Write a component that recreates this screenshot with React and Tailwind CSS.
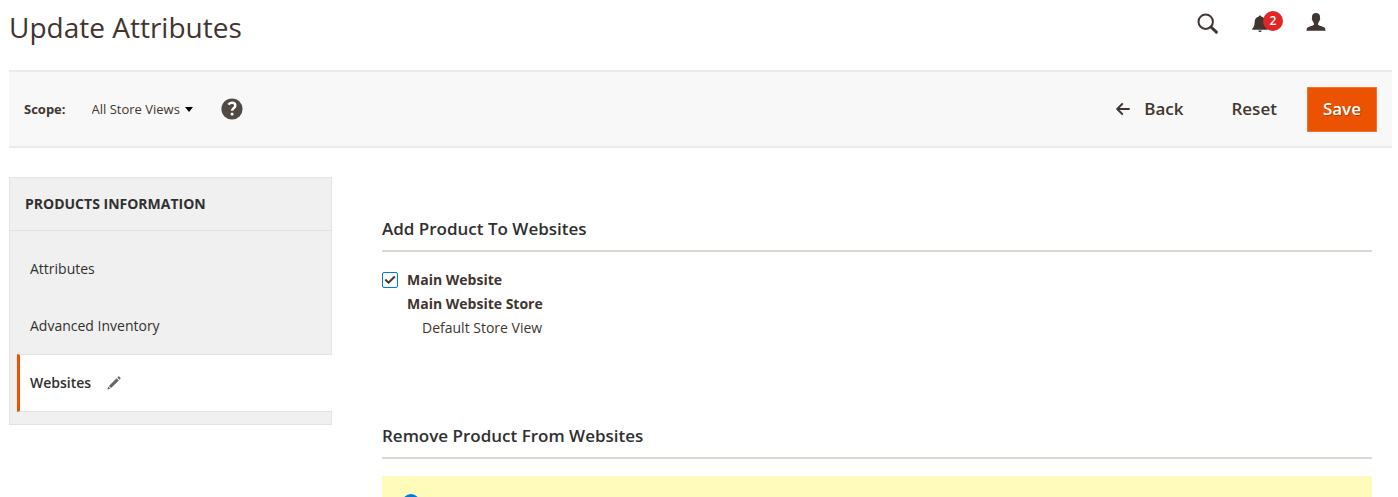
const TABS = [
  { label: "Attributes", active: false },
  { label: "Advanced Inventory", active: false },
  { label: "Websites", active: true },
];

function SearchIcon() {
  return (
    <svg className="size-[22px]" viewBox="0 0 22 22" fill="none" stroke="currentColor" aria-hidden="true">
      <circle cx="8.700" cy="8.700" r="7.200" strokeWidth="2" />
      <path d="M14 14 19.400 19.200" strokeWidth="3" strokeLinecap="round" />
    </svg>
  );
}

function BellIcon() {
  return (
    <svg className="h-[18px] w-4" viewBox="0 0 16 18" fill="currentColor" aria-hidden="true">
      <path d="M8 .4c.7 0 1.200.5 1.200 1.200 2.500.6 4 2.500 4.100 4.900.1 3.300.7 5.600 2.400 7v1.200H.3v-1.200c1.700-1.400 2.300-3.700 2.400-7 .1-2.400 1.600-4.300 4.100-4.900C6.800.9 7.300.4 8 .4Z" />
      <path d="M6.200 15.600h3.600c-.2.900-.9 1.500-1.800 1.500s-1.600-.6-1.800-1.500Z" />
    </svg>
  );
}

function UserIcon() {
  return (
    <svg className="h-[22px] w-5" viewBox="0 0 20 22" fill="currentColor" aria-hidden="true">
      <path d="M10 0c2.600 0 4 1.500 4 3.800 0 .5-.1 1-.1 1.400.5.200.4 1.600-.4 2.200-.3 1.100-.8 2-1.400 2.600v1.700c1.300 1 3.200 1.300 5.200 2.200 1.700.7 2.200 1.700 2.200 3.800h-19c0-2.100.5-3.100 2.200-3.800 2-.9 3.900-1.200 5.200-2.200V10c-.6-.6-1.100-1.500-1.400-2.600-.8-.6-.9-2-.4-2.200 0-.4-.1-.9-.1-1.400C6 1.500 7.400 0 10 0Z" />
    </svg>
  );
}

function ArrowLeftIcon() {
  return (
    <svg className="h-3 w-[14px]" viewBox="0 0 14 12" fill="none" stroke="currentColor" strokeWidth="1.900" strokeLinecap="round" strokeLinejoin="round" aria-hidden="true">
      <path d="M13 6H1.500M6.200 1 1.200 6l5 5" />
    </svg>
  );
}

function HelpIcon() {
  return (
    <svg className="size-[22px]" viewBox="0 0 22 22" aria-hidden="true">
      <circle cx="11" cy="11" r="10.600" fill="#514943" />
      <path d="M7.500 6.700c.8-1.400 2-2 3.500-2 2 0 3.300 1 3.300 2.700 0 2.700-3.200 2.700-3.200 5.400" fill="none" stroke="#fff" strokeWidth="2.500" />
      <rect x="9.700" y="14.800" width="2.800" height="2.800" rx="1" fill="#fff" />
    </svg>
  );
}

function PencilIcon() {
  return (
    <svg className="size-[14px]" viewBox="0 0 14 14" fill="#6b645f" aria-hidden="true">
      <path d="m.4 13.600.9-3 2.100 2.100-3 .9ZM1.900 9.900l7.700-7.700 2.200 2.200-7.700 7.700-2.200-2.200ZM10.300 1.500l.9-.9c.3-.3.700-.3 1 0l1.200 1.200c.3.300.3.700 0 1l-.9.900-2.200-2.200Z" />
    </svg>
  );
}

function Section({ title, children }) {
  return (
    <section>
      <h2 className="border-b-2 border-[#dcd8d0] pb-[9px] text-[17px] leading-6 font-semibold text-[#303030]">
        {title}
      </h2>
      {children}
    </section>
  );
}

export default function App() {
  return (
    <div className="flex h-screen flex-col overflow-hidden bg-white pr-1.5 pl-[9px] font-['Open_Sans','Noto_Sans',sans-serif] text-sm text-[#41362f]">
      <header className="flex h-[70px] shrink-0 items-start justify-between pr-[66px]">
        <h1 className="pt-[7px] text-[28px] leading-10">Update Attributes</h1>
        <div className="flex items-center pt-[13px]">
          <button type="button" aria-label="Search">
            <SearchIcon />
          </button>
          <button type="button" aria-label="Notifications" className="relative mr-[38px] ml-[33px]">
            <BellIcon />
            <span className="absolute -top-1 left-[11px] flex size-5 items-center justify-center rounded-full bg-[#e22626] text-xs font-semibold text-white">
              2
            </span>
          </button>
          <button type="button" aria-label="Account">
            <UserIcon />
          </button>
        </div>
      </header>

      <div className="flex h-[78px] shrink-0 items-center justify-between border-t-2 border-b-2 border-[#ebebeb] bg-[#f8f8f8] px-[15px]">
        <div className="flex items-center">
          <label htmlFor="scope" className="text-[13px] leading-5 font-bold">
            Scope:
          </label>
          <div className="relative ml-[26px] flex items-center">
            <select id="scope" className="appearance-none bg-transparent pr-3 text-[13px] leading-5">
              <option>All Store Views</option>
            </select>
            <svg className="pointer-events-none absolute right-0 h-[5px] w-2" viewBox="0 0 8 5" fill="#000" aria-hidden="true">
              <path d="M0 0h8L4 5Z" />
            </svg>
          </div>
          <button type="button" aria-label="Help" className="ml-7">
            <HelpIcon />
          </button>
        </div>
        <div className="flex items-center text-[17px] font-semibold">
          <button type="button" className="flex items-center gap-3.5">
            <ArrowLeftIcon />
            Back
          </button>
          <button type="button" className="ml-12">
            Reset
          </button>
          <button type="button" className="ml-[30px] h-[45px] border border-[#f0762f] bg-[#eb5202] px-[15px] text-white [text-shadow:1px_1px_0_rgba(0,0,0,0.25)]">
            Save
          </button>
        </div>
      </div>

      <div className="flex items-start pt-[29px]">
        <aside className="w-[323px] shrink-0 border border-r-0 border-[#e3e3e3] bg-[#f0f0f0]">
          <h2 className="border-r border-b border-[#e3e3e3] pt-[15px] pb-4 pl-[15px] text-sm leading-[21px] font-bold text-[#303030] uppercase">
            Products Information
          </h2>
          <nav className="flex flex-col pl-[7px] text-[#303030]">
            <div className="h-[9px] border-r border-[#e3e3e3]" />
            {TABS.map((tab) => (
              <a
                key={tab.label}
                href="#"
                aria-current={tab.active ? "page" : undefined}
                className={
                  tab.active
                    ? "flex h-[58px] items-center gap-4 border-y border-l-[3px] border-y-[#e3e3e3] border-l-[#eb5202] bg-white pl-2.5 font-semibold"
                    : "flex h-[57px] items-center border-r border-[#e3e3e3] pl-[13px]"
                }
              >
                {tab.label}
                {tab.active && <PencilIcon />}
              </a>
            ))}
            <div className="h-3 border-r border-[#e3e3e3]" />
          </nav>
        </aside>

        <main className="mr-5 ml-[50px] flex min-w-0 flex-1 flex-col gap-[84px] pt-10">
          <Section title="Add Product To Websites">
            <div className="pt-4 leading-6">
              <label className="flex items-center gap-[9px] font-bold">
                <span className="relative flex">
                  <input
                    type="checkbox"
                    defaultChecked
                    className="peer size-4 appearance-none rounded-xs border border-[#007bdb] bg-white"
                  />
                  <svg className="pointer-events-none absolute inset-0 hidden size-4 peer-checked:block" viewBox="0 0 16 16" fill="none" stroke="#41362f" strokeWidth="2" aria-hidden="true">
                    <path d="m3.300 7.500 3.200 3.200 6.300-6.200" />
                  </svg>
                </span>
                Main Website
              </label>
              <div className="pl-[25px] font-bold">Main Website Store</div>
              <div className="pl-10">Default Store View</div>
            </div>
          </Section>

          <Section title="Remove Product From Websites">
            <div className="mt-[17px] bg-[#fffbbb] px-5 py-[18px]">
              <svg className="size-[18px]" viewBox="0 0 18 18" aria-hidden="true">
                <circle cx="9" cy="9" r="9" fill="#007bdb" />
                <path d="M9 8v5M9 5v1.500" stroke="#fff" strokeWidth="2" />
              </svg>
            </div>
          </Section>
        </main>
      </div>
    </div>
  );
}
